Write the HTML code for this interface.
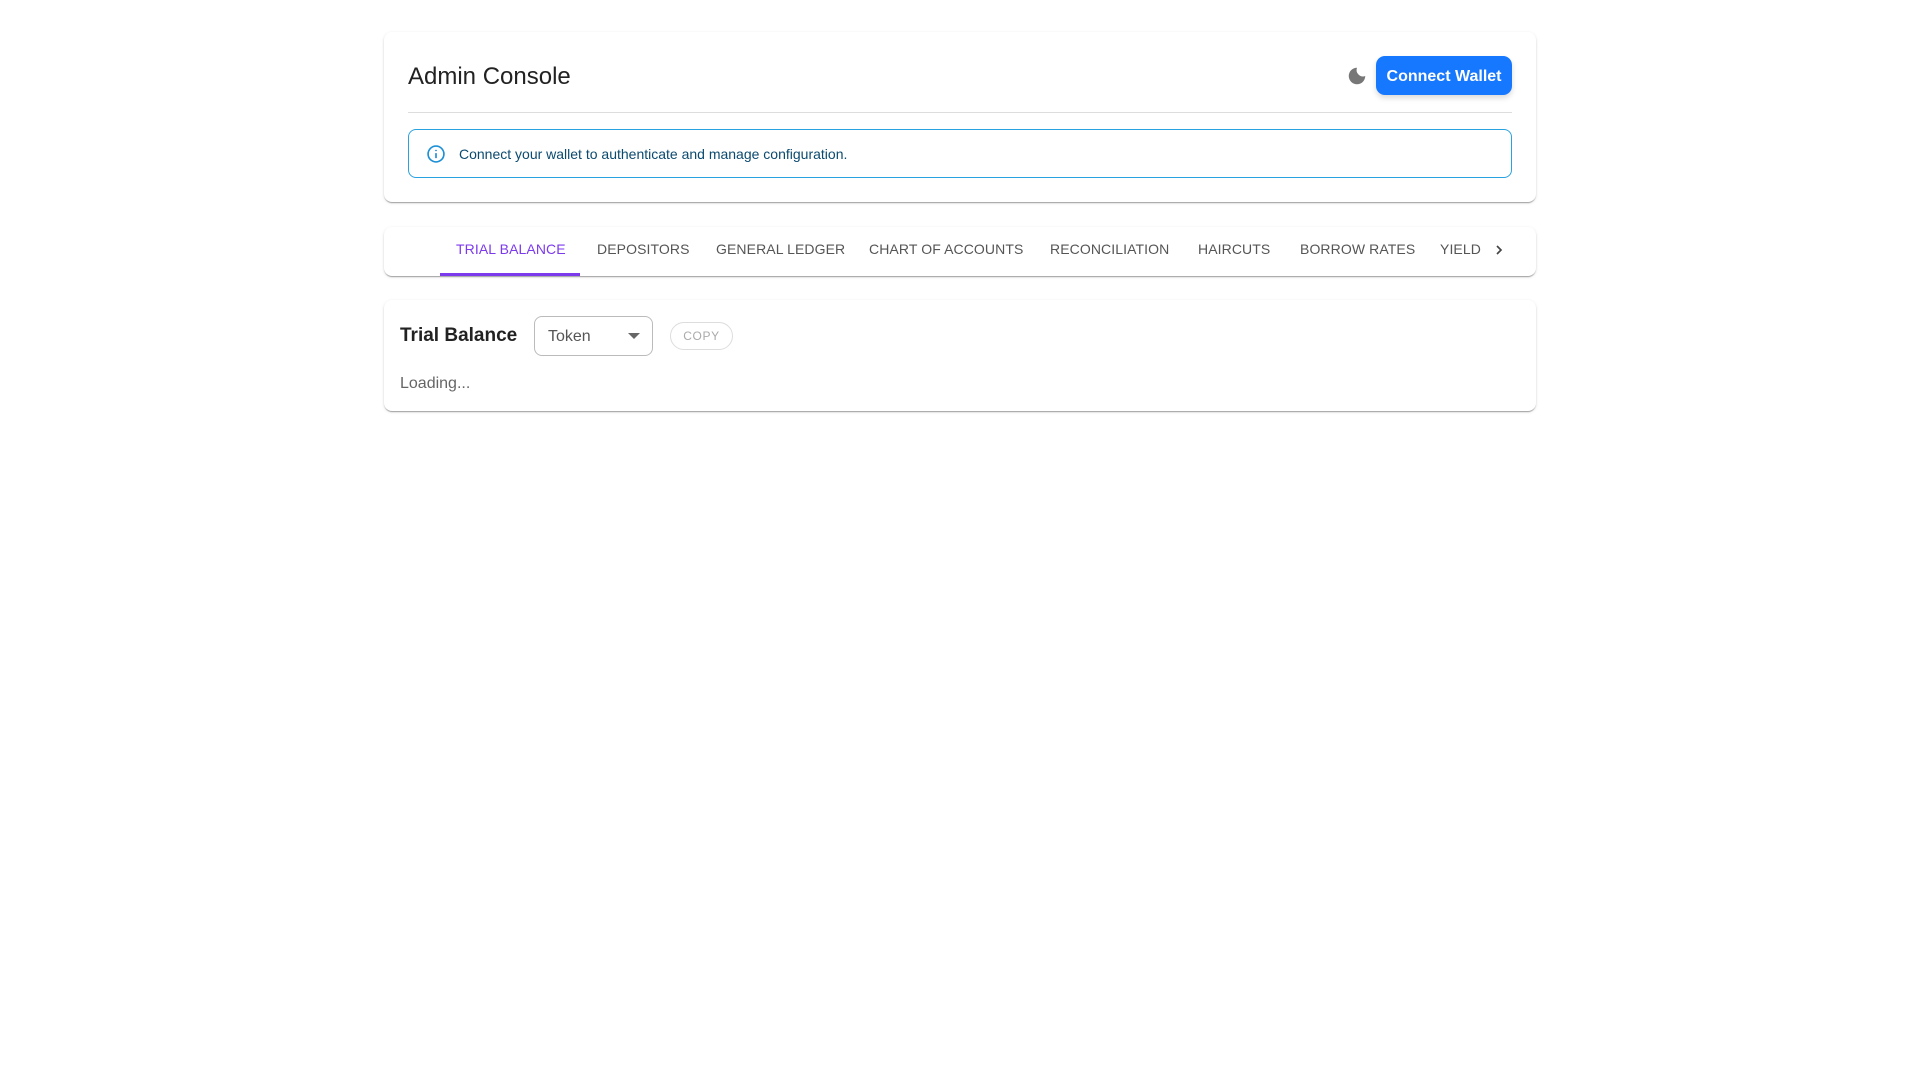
<!DOCTYPE html>
<html><head><meta charset="utf-8"><style>
*{box-sizing:border-box;margin:0;padding:0}
body{width:1920px;height:1080px;background:#fff;font-family:"Liberation Sans",Roboto,sans-serif;overflow:hidden}
.wrap{position:absolute;left:384px;width:1152px;top:32px}
.card{background:#fff;border-radius:8px;box-shadow:0 2px 1px -1px rgba(0,0,0,.2),0 1px 1px rgba(0,0,0,.14),0 1px 3px rgba(0,0,0,.12)}
.c1{height:170px;padding:0 24px;position:relative}
.title{position:absolute;left:24px;top:31px;font-size:24px;color:#222}
.div{position:absolute;left:24px;right:24px;top:80px;border-top:1px solid #ddd}
.alert{position:absolute;left:24px;right:24px;top:97px;height:49px;border:1px solid #29a3e0;border-radius:8px;color:#0b4a6f;font-size:14px;display:flex;align-items:center;padding-left:50px}
.alert svg{position:absolute;left:17px;top:14px}
.btn{position:absolute;right:24px;top:24px;width:136px;height:39px;background:#1677ff;color:#fff;border-radius:9px;font-weight:bold;font-size:16px;display:flex;align-items:center;justify-content:center;box-shadow:0 3px 6px rgba(0,0,0,.15);padding-top:2px}
.moon{position:absolute;right:168px;top:33px}
.c2{position:absolute;top:195px;left:0;width:1152px;height:49px}
.tab{position:absolute;top:0;height:49px;line-height:45px;font-size:14px;font-weight:500;color:#555;letter-spacing:0.1px}
.c3{position:absolute;top:268px;left:0;width:1152px;height:111px}
</style></head><body>
<div class="wrap">
<div class="card c1">
<div class="title">Admin Console</div>
<svg class="moon" width="22" height="22" viewBox="0 0 24 24"><path fill="#777" d="M12 3a9 9 0 1 0 9 9 7 7 0 0 1-9-9z"/></svg>
<div class="btn">Connect Wallet</div>
<div class="div"></div>
<div class="alert"><svg width="20" height="20" viewBox="0 0 24 24" fill="none" stroke="#1e90d6" stroke-width="2"><circle cx="12" cy="12" r="9.5"/><path d="M12 11v6M12 7v1.5"/></svg>Connect your wallet to authenticate and manage configuration.</div>
</div>
<div class="card c2">
<div class="tab" style="left:72px;color:#7c3aed">TRIAL BALANCE</div>
<div style="position:absolute;left:56px;width:140px;top:46px;height:3px;background:#7c3aed"></div>
<div class="tab" style="left:213px">DEPOSITORS</div>
<div class="tab" style="left:332px">GENERAL LEDGER</div>
<div class="tab" style="left:485px">CHART OF ACCOUNTS</div>
<div class="tab" style="left:666px">RECONCILIATION</div>
<div class="tab" style="left:814px">HAIRCUTS</div>
<div class="tab" style="left:916px">BORROW RATES</div>
<div class="tab" style="left:1056px">YIELD</div>
<svg style="position:absolute;left:1107px;top:15px" width="16" height="16" viewBox="0 0 24 24"><path d="M9 6l6 6-6 6" fill="none" stroke="#444" stroke-width="2.5"/></svg>
</div>
<div class="card c3">
<div style="position:absolute;left:16px;top:25px;font-size:19px;font-weight:bold;color:#222">Trial Balance</div>
<div style="position:absolute;left:150px;top:16px;width:119px;height:40px;border:1px solid #bbb;border-radius:8px;font-size:16px;color:#555;line-height:40px;padding-left:13px">Token<svg style="position:absolute;right:12px;top:16px" width="12" height="6"><path d="M0 0h12L6 6z" fill="#666"/></svg></div>
<div style="position:absolute;left:286px;top:22px;width:63px;height:28px;border:1px solid #ddd;border-radius:14px;font-size:12px;color:#aaa;text-align:center;line-height:26px;letter-spacing:.6px">COPY</div>
<div style="position:absolute;left:16px;top:75px;font-size:16px;color:#666">Loading...</div>
</div>
</div>
</body></html>
